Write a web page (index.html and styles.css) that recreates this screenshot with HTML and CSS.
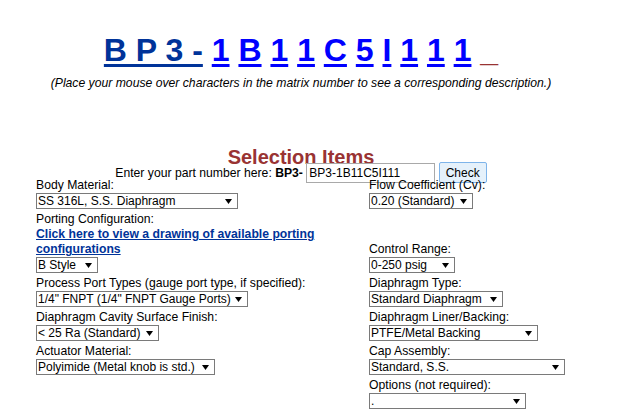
FILE: index.html
```html
<!DOCTYPE html>
<html lang="en">
<head>
  <meta charset="UTF-8"/>
  <title>BP3 Matrix Number</title>
  <link rel="stylesheet" href="styles.css">
</head>
<body>
  <div class="page">
    <!-- matrix number, one link per character -->
    <div class="matrix">
      <span class="prefix">B P 3 -</span>
      <a href="#" class="part">1</a>
      <a href="#" class="part">B</a>
      <a href="#" class="part">1</a>
      <a href="#" class="part">1</a>
      <a href="#" class="part">C</a>
      <a href="#" class="part">5</a>
      <a href="#" class="part">I</a>
      <a href="#" class="part">1</a>
      <a href="#" class="part">1</a>
      <a href="#" class="part">1</a>
      <span class="blank">_</span>
    </div>
    <p class="hint">(Place your mouse over characters in the matrix number to see a corresponding description.)</p>

    <h2 class="title">Selection Items</h2>
    <form class="enter-row">Enter your part number here: <b>BP3-</b> <input type="text" class="part-input" value="BP3-1B11C5I111"/> <button type="button" class="check">Check</button></form>

    <div class="fields">
      <div class="field">
        <label>Body Material:</label>
        <select class="sel w-body"><option>SS 316L, S.S. Diaphragm</option></select>
      </div>
      <div class="field">
        <label>Flow Coefficient (Cv):</label>
        <select class="sel w-flow"><option>0.20 (Standard)</option></select>
      </div>

      <div class="field">
        <label>Porting Configuration:</label>
        <a href="#" class="drawing-link">Click here to view a drawing of available porting configurations</a>
        <select class="sel w-style"><option>B Style</option></select>
      </div>
      <div class="field bottom">
        <label>Control Range:</label>
        <select class="sel w-range"><option>0-250 psig</option></select>
      </div>

      <div class="field">
        <label>Process Port Types (gauge port type, if specified):</label>
        <select class="sel w-port"><option>1/4" FNPT (1/4" FNPT Gauge Ports)</option></select>
      </div>
      <div class="field">
        <label>Diaphragm Type:</label>
        <select class="sel w-dtype"><option>Standard Diaphragm</option></select>
      </div>

      <div class="field">
        <label>Diaphragm Cavity Surface Finish:</label>
        <select class="sel w-finish"><option>&lt; 25 Ra (Standard)</option></select>
      </div>
      <div class="field">
        <label>Diaphragm Liner/Backing:</label>
        <select class="sel w-liner"><option>PTFE/Metal Backing</option></select>
      </div>

      <div class="field">
        <label>Actuator Material:</label>
        <select class="sel w-actuator"><option>Polyimide (Metal knob is std.)</option></select>
      </div>
      <div class="field">
        <label>Cap Assembly:</label>
        <select class="sel w-cap"><option>Standard, S.S.</option></select>
      </div>

      <div class="field"></div>
      <div class="field">
        <label>Options (not required):</label>
        <select class="sel w-options"><option>.</option></select>
      </div>
    </div>
  </div>
</body>
</html>
```

FILE: styles.css
```css
body {
  margin: 8px;
  background: #fff;
  color: #000;
  font-family: "Liberation Sans", Arial, sans-serif;
  font-size: 12.2px;
}
.page {
  width: 586px;
  text-align: center;
}
.matrix {
  padding-top: 24px;
  font-size: 32px;
  font-weight: bold;
  line-height: 37px;
}
.matrix .prefix {
  color: #003399;
  text-decoration: underline;
  text-decoration-thickness: 3px;
  text-underline-offset: 3px;
}
.matrix .part {
  color: #0000ff;
  text-decoration: underline;
  text-decoration-thickness: 3px;
  text-underline-offset: 3px;
}
.matrix .blank {
  color: #993333;
}
.hint {
  margin: 7px 0 0;
  font-style: italic;
  line-height: 14px;
}
.title {
  margin: 59px 0 0;
  font-size: 20px;
  line-height: 16px;
  color: #993333;
}
.enter-row {
  margin: -3px 0 0;
  line-height: 14px;
}
.part-input {
  box-sizing: border-box;
  width: 129px;
  height: 20px;
  margin: 0;
  padding: 1px 2px;
  border: 1px solid #a9a9a9;
  font-family: inherit;
  font-size: 12px;
  vertical-align: baseline;
}
.check {
  box-sizing: border-box;
  width: 48px;
  height: 21px;
  margin: 0;
  padding: 0;
  border: 1px solid #7eb4ea;
  border-radius: 2px;
  background: #e5f1fb;
  font-family: inherit;
  font-size: 12px;
  color: #000;
}
.fields {
  display: grid;
  grid-template-columns: 333px 197px;
  margin: -5px 0 0 28px;
  text-align: left;
}
.field {
  padding-bottom: 3px;
}
.field.bottom {
  align-self: end;
}
.field label {
  display: block;
  line-height: 15px;
}
.drawing-link {
  display: block;
  line-height: 15px;
  font-weight: bold;
  color: #003399;
}
.sel {
  display: block;
  box-sizing: border-box;
  height: 16px;
  margin: 0;
  padding: 0 14px 0 1px;
  border: 1px solid #7a7a7a;
  border-radius: 0;
  -webkit-appearance: none;
  appearance: none;
  background: #fff url("data:image/svg+xml;utf8,<svg xmlns='http://www.w3.org/2000/svg' width='7' height='5'><path d='M0 0h7L3.5 5z'/></svg>") no-repeat right 5px center;
  font-family: inherit;
  font-size: 12px;
  line-height: 14px;
  color: #000;
}
.w-body { width: 202px; }
.w-style { width: 62px; }
.w-port { width: 212px; }
.w-finish { width: 123px; }
.w-actuator { width: 179px; }
.w-flow { width: 104px; }
.w-range { width: 86px; }
.w-dtype { width: 134px; }
.w-liner { width: 169px; }
.w-cap { width: 196px; }
.w-options { width: 157px; }
```
